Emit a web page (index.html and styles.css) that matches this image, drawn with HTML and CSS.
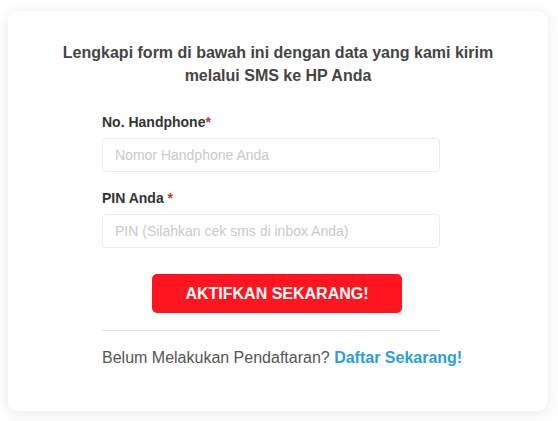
FILE: index.html
```html
<!DOCTYPE html>
<html lang="id">
<head>
<meta charset="utf-8">
<title>Aktivasi</title>
<link rel="stylesheet" href="styles.css">
</head>
<body>
<div class="card">
  <h2 class="title">Lengkapi form di bawah ini dengan data yang kami kirim<br>melalui SMS ke HP Anda</h2>
  <form class="form">
    <label class="label">No. Handphone<span class="req">*</span></label>
    <input class="input" type="text" placeholder="Nomor Handphone Anda">
    <label class="label label-2">PIN Anda <span class="req">*</span></label>
    <input class="input" type="text" placeholder="PIN (Silahkan cek sms di inbox Anda)">
    <div class="btn-row"><button class="btn" type="button">AKTIFKAN SEKARANG!</button></div>
    <hr class="divider">
    <p class="signup">Belum Melakukan Pendaftaran? <a class="link" href="#">Daftar Sekarang!</a></p>
  </form>
</div>
</body>
</html>
```

FILE: styles.css
```css
html, body {
  margin: 0;
  padding: 0;
  background: #ffffff;
}
body {
  padding: 11px 10px 10px 8px;
  font-family: "Liberation Sans", Arial, sans-serif;
}
.card {
  width: 540px;
  height: 400px;
  box-sizing: border-box;
  background: #fff;
  border-radius: 10px;
  box-shadow: 0 2px 16px rgba(0, 0, 0, 0.09);
  padding-top: 30px;
}
.title {
  margin: 0;
  font-size: 16px;
  line-height: 23px;
  font-weight: bold;
  color: #444;
  text-align: center;
}
.form {
  width: 338px;
  margin: 26px 0 0 94px;
  display: flex;
  flex-direction: column;
}
.label {
  display: block;
  font-size: 14px;
  line-height: 18px;
  font-weight: bold;
  color: #333;
  margin-bottom: 7px;
}
.label-2 {
  margin-top: 17px;
}
.req {
  color: #e2262f;
}
.input {
  box-sizing: border-box;
  width: 338px;
  height: 34px;
  border: 1px solid #ececec;
  border-radius: 4px;
  padding: 0 12px;
  font-family: "Liberation Sans", Arial, sans-serif;
  font-size: 14px;
  color: #555;
  background: #fff;
  outline: none;
}
.input::placeholder {
  color: #c9c9c9;
}
.btn-row {
  display: flex;
  justify-content: center;
  margin-top: 26px;
  padding-left: 12px;
}
.btn {
  width: 250px;
  height: 39px;
  border: none;
  border-radius: 5px;
  background: #ff151f;
  color: #fff;
  font-family: "Liberation Sans", Arial, sans-serif;
  font-size: 16px;
  font-weight: bold;
  cursor: pointer;
}
.divider {
  border: none;
  border-top: 1px solid #e2e2e2;
  margin: 17px 0 0 0;
  width: 338px;
}
.signup {
  margin: 17px 0 0 0;
  font-size: 16px;
  line-height: 20px;
  color: #555;
  white-space: nowrap;
}
.link {
  color: #2a9fd8;
  font-weight: bold;
  text-decoration: none;
}
```
